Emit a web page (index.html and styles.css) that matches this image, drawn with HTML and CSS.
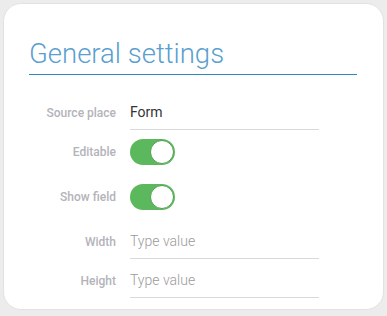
FILE: index.html
```html
<!DOCTYPE html>
<html>
<head>
<meta charset="utf-8">
<link rel="stylesheet" href="styles.css">
</head>
<body>
<div class="card">
  <div class="title">General settings</div>
  <div class="form">
    <div class="row row-input r1">
      <div class="label">Source place</div>
      <div class="input"><span class="value">Form</span></div>
    </div>
    <div class="row row-toggle r2">
      <div class="label">Editable</div>
      <div class="toggle"><span class="knob"></span></div>
    </div>
    <div class="row row-toggle r3">
      <div class="label">Show field</div>
      <div class="toggle"><span class="knob"></span></div>
    </div>
    <div class="row row-input r4">
      <div class="label">Width</div>
      <div class="input"><span class="placeholder">Type value</span></div>
    </div>
    <div class="row row-input r5">
      <div class="label">Height</div>
      <div class="input"><span class="placeholder">Type value</span></div>
    </div>
  </div>
</div>
</body>
</html>
```
FILE: styles.css
```css
html, body {
  margin: 0;
  padding: 0;
  background: #ececec;
  font-family: Roboto, "Liberation Sans", sans-serif;
}
body {
  width: 387px;
  height: 316px;
  overflow: hidden;
}
.card {
  box-sizing: border-box;
  margin: 3px 0 0 3px;
  width: 381px;
  height: 307px;
  background: #fff;
  border-radius: 18px;
  border: 1px solid #e2e2e2;
  padding: 33px 0 0 25px;
}
.title {
  width: 328px;
  font-size: 27.5px;
  font-weight: 300;
  color: #5a9fcf;
  line-height: 33px;
  height: 37px;
  border-bottom: 1px solid #2a8cbb;
}
.form {
  padding-top: 23px;
}
.row {
  display: flex;
  align-items: center;
}
.label {
  width: 87px;
  text-align: right;
  margin-right: 14px;
  font-size: 12px;
  font-weight: 500;
  color: #b3b3ba;
}
.input {
  box-sizing: border-box;
  width: 189px;
  height: 32px;
  border-bottom: 1px solid #d9d9d9;
  display: flex;
  align-items: center;
  padding-bottom: 3px;
  font-size: 14px;
}
.row-input .label {
  padding-bottom: 3px;
}
.value {
  color: #333;
}
.placeholder {
  color: #9a9a9a;
  font-weight: 300;
}
.toggle {
  position: relative;
  box-sizing: border-box;
  width: 45px;
  height: 26px;
  border-radius: 13px;
  background: #5cb85c;
}
.knob {
  position: absolute;
  top: 1px;
  right: 1px;
  width: 24px;
  height: 24px;
  border-radius: 50%;
  background: #fff;
  box-sizing: border-box;
  border: 1px solid #4f9f4f;
}
.r2 { margin-top: 9px; }
.r3 { margin-top: 19px; }
.r4 { margin-top: 17px; }
.r5 { margin-top: 7px; }
```
